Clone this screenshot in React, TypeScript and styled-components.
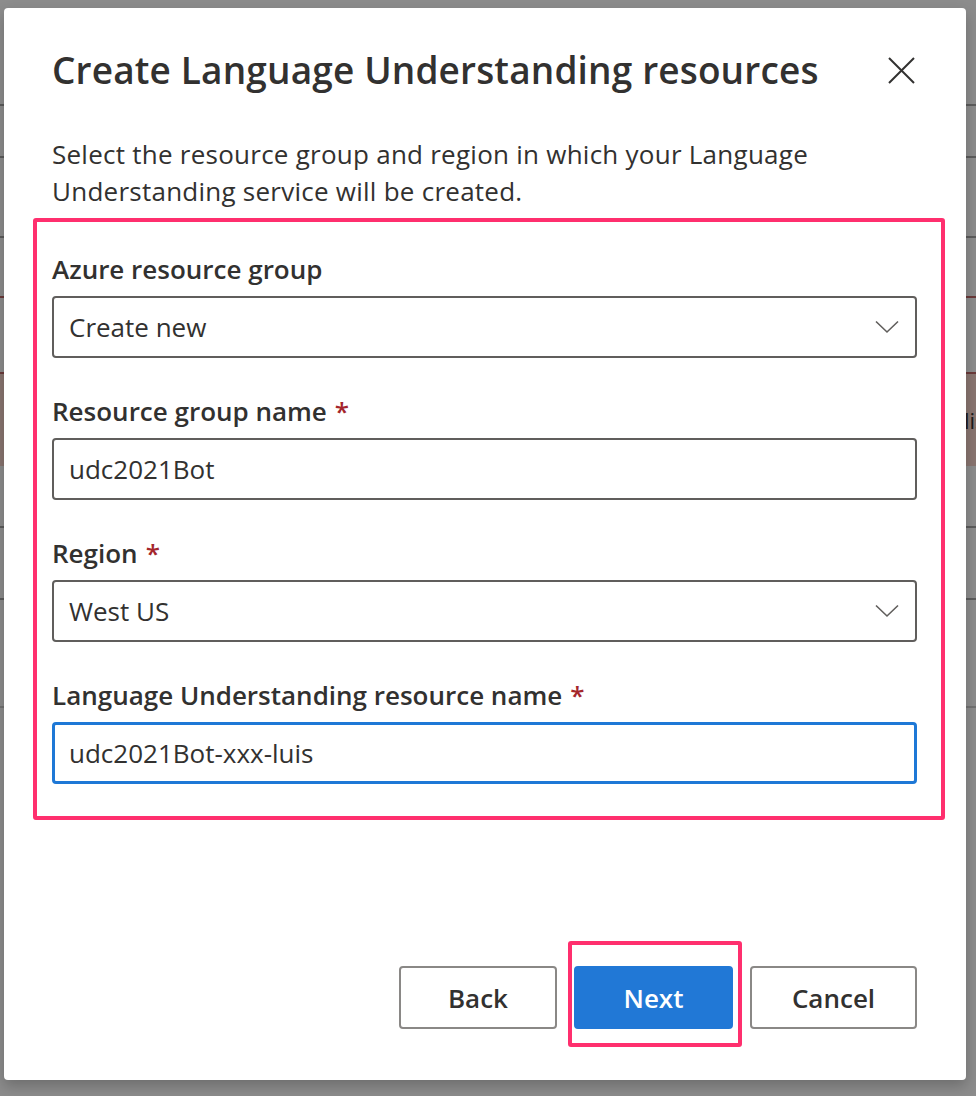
import React from "react";
import styled, { createGlobalStyle } from "styled-components";

const GlobalStyle = createGlobalStyle`
  html, body { margin: 0; padding: 0; }
  body {
    width: 976px;
    height: 1096px;
    overflow: hidden;
    font-family: "Open Sans", "Noto Sans", "Liberation Sans", sans-serif;
    color: #323130;
    background: #ffffff;
  }
  * { box-sizing: border-box; }
`;

const Screen = styled.div`
  position: relative;
  width: 976px;
  height: 1096px;
  overflow: hidden;
  background: #ffffff;
`;

const BackPage = styled.div`
  display: flex;
  flex-direction: column;
  width: 976px;
`;

const BackRow = styled.div<{ $h: number; $line?: string; $bg?: string }>`
  height: ${(p) => p.$h}px;
  border-bottom: 2px solid ${(p) => p.$line || "#b0b0b0"};
  background: ${(p) => p.$bg || "#ffffff"};
  display: flex;
  align-items: center;
  font-size: 22px;
  color: #323130;
  white-space: nowrap;
  overflow: hidden;
`;

const BackText = styled.span`
  padding-left: 964px;
`;

const Overlay = styled.div`
  position: absolute;
  inset: 0;
  background: rgba(0, 0, 0, 0.45);
`;

const Dialog = styled.div`
  position: absolute;
  left: 4px;
  top: 8px;
  width: 962px;
  height: 1072px;
  background: #ffffff;
  border-radius: 4px;
  box-shadow: 0 6px 14px rgba(0, 0, 0, 0.22);
  display: flex;
  flex-direction: column;
  padding: 0 49px 0 48px;
`;

const Header = styled.div`
  display: flex;
  align-items: center;
  justify-content: space-between;
  padding-top: 40px;
  height: 84px;
`;

const Title = styled.h1`
  margin: 0;
  font-size: 37px;
  line-height: 44px;
  font-weight: 600;
  color: #323130;
  letter-spacing: 0.15px;
`;

const CloseButton = styled.button`
  border: none;
  background: transparent;
  padding: 0;
  width: 28px;
  height: 28px;
  display: flex;
  align-items: center;
  justify-content: center;
  margin-right: 2px;
  cursor: pointer;
`;

const Description = styled.p`
  margin: 44px 0 0;
  font-size: 26px;
  line-height: 37px;
  letter-spacing: 0.25px;
  color: #323130;
  width: 820px;
`;

const FormHighlight = styled.div`
  margin: 8px -28px 0 -19px;
  border: 4px solid #ff2f6e;
  border-radius: 3px;
  padding: 29px 24px 32px 15px;
  display: flex;
  flex-direction: column;
  gap: 35px;
`;

const Field = styled.div`
  display: flex;
  flex-direction: column;
  gap: 9px;
`;

const Label = styled.label`
  font-size: 26px;
  line-height: 36px;
  font-weight: 600;
  color: #323130;
`;

const Required = styled.span`
  color: #a4262c;
  margin-left: 8px;
`;

const Box = styled.div<{ $focused?: boolean }>`
  height: 62px;
  border: ${(p) => (p.$focused ? "3px solid #1e78d6" : "2px solid #605e5c")};
  border-radius: 4px;
  display: flex;
  align-items: center;
  justify-content: space-between;
  padding: 0 16px 0 ${(p) => (p.$focused ? "14px" : "15px")};
  font-size: 26px;
  color: #323130;
`;

const Footer = styled.div`
  margin-top: auto;
  padding-bottom: 51px;
  display: flex;
  justify-content: flex-end;
  gap: 17px;
`;

const Button = styled.button<{ $primary?: boolean; $w: number }>`
  width: ${(p) => p.$w}px;
  height: 63px;
  border-radius: 4px;
  border: 2px solid ${(p) => (p.$primary ? "#2178d6" : "#8a8886")};
  background: ${(p) => (p.$primary ? "#2178d6" : "#ffffff")};
  color: ${(p) => (p.$primary ? "#ffffff" : "#323130")};
  font-family: inherit;
  font-size: 26px;
  font-weight: 600;
  cursor: pointer;
`;

const NextMark = styled.div`
  position: relative;
  &::after {
    content: "";
    position: absolute;
    left: -6px;
    right: -9px;
    top: -25px;
    bottom: -18px;
    border: 4px solid #ff2f6e;
    border-radius: 3px;
    pointer-events: none;
  }
`;

const Chevron = () => (
  <svg width="24" height="14" viewBox="0 0 24 14" aria-hidden="true">
    <path d="M1 1.5 L12 12 L23 1.5" fill="none" stroke="#605e5c" strokeWidth="1.6" />
  </svg>
);

const CloseIcon = () => (
  <svg width="27" height="27" viewBox="0 0 27 27" aria-hidden="true">
    <path d="M1 1 L26 26 M26 1 L1 26" stroke="#323130" strokeWidth="2" fill="none" />
  </svg>
);

export default function App() {
  const rows: { h: number; line?: string; bg?: string; text?: string }[] = [
    { h: 106, line: "#a8a8a8" },
    { h: 52, line: "#a8a8a8" },
    { h: 80, line: "#a8a8a8" },
    { h: 60, line: "#c46a6a" },
    { h: 76, line: "#c46a6a" },
    { h: 94, line: "#ffffff", bg: "#f9d5cc", text: "lis" },
    { h: 60, line: "#a8a8a8" },
    { h: 72, line: "#a8a8a8" },
    { h: 108, line: "#d0d0d0" },
    { h: 388, line: "#ffffff" },
  ];

  return (
    <Screen>
      <GlobalStyle />
      <BackPage>
        {rows.map((r, i) => (
          <BackRow key={i} $h={r.h} $line={r.line} $bg={r.bg}>
            {r.text && <BackText>{r.text}</BackText>}
          </BackRow>
        ))}
      </BackPage>
      <Overlay />
      <Dialog role="dialog" aria-label="Create Language Understanding resources">
        <Header>
          <Title>Create Language Understanding resources</Title>
          <CloseButton aria-label="Close">
            <CloseIcon />
          </CloseButton>
        </Header>
        <Description>
          Select the resource group and region in which your Language Understanding service will be created.
        </Description>
        <FormHighlight>
          <Field>
            <Label>Azure resource group</Label>
            <Box>
              <span>Create new</span>
              <Chevron />
            </Box>
          </Field>
          <Field>
            <Label>
              Resource group name<Required>*</Required>
            </Label>
            <Box>
              <span>udc2021Bot</span>
            </Box>
          </Field>
          <Field>
            <Label>
              Region<Required>*</Required>
            </Label>
            <Box>
              <span>West US</span>
              <Chevron />
            </Box>
          </Field>
          <Field>
            <Label>
              Language Understanding resource name<Required>*</Required>
            </Label>
            <Box $focused>
              <span>udc2021Bot-xxx-luis</span>
            </Box>
          </Field>
        </FormHighlight>
        <Footer>
          <Button $w={158}>Back</Button>
          <NextMark>
            <Button $primary $w={159}>Next</Button>
          </NextMark>
          <Button $w={167}>Cancel</Button>
        </Footer>
      </Dialog>
    </Screen>
  );
}
